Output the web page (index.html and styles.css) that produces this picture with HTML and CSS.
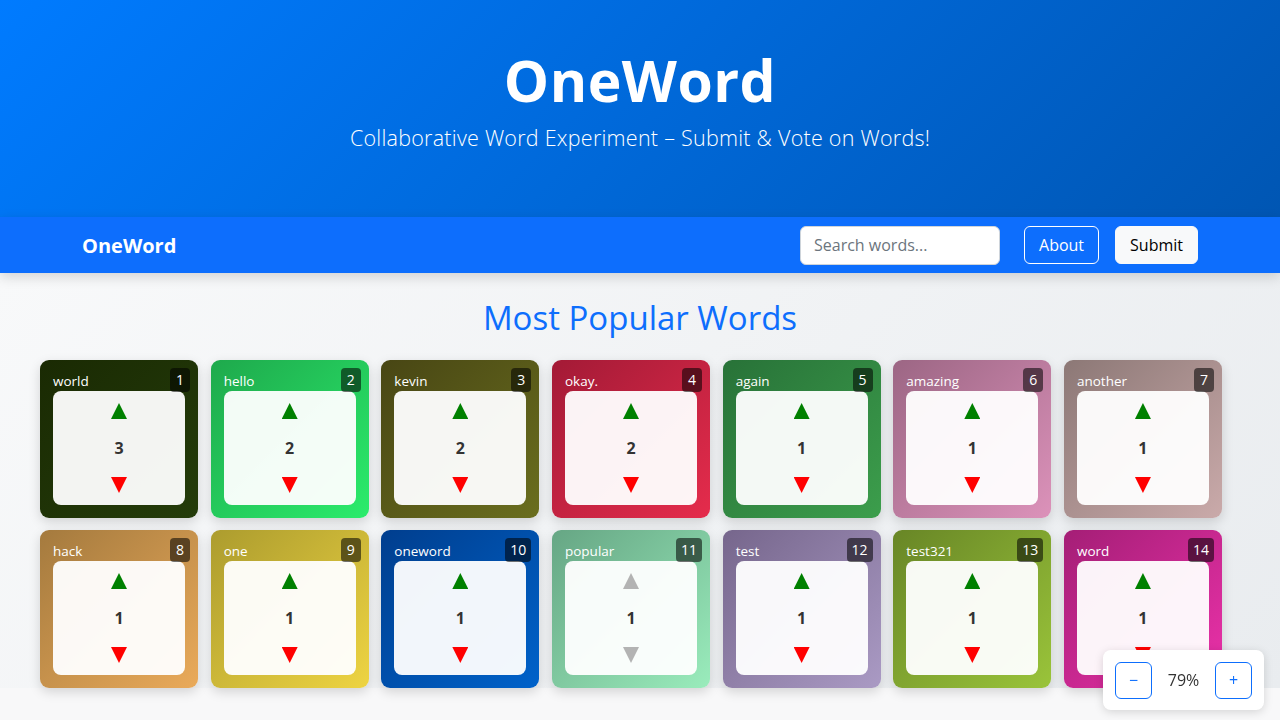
FILE: index.html
```html
<!DOCTYPE html>
<html lang="en">
<head>
<meta charset="utf-8">
<title>OneWord</title>
<link rel="stylesheet" href="styles.css">
</head>
<body>
<header class="hero">
  <h1 class="hero-title">OneWord</h1>
  <p class="hero-sub">Collaborative Word Experiment – Submit &amp; Vote on Words!</p>
</header>
<nav class="navbar">
  <div class="nav-inner">
    <a class="brand">OneWord</a>
    <div class="nav-right">
      <input class="search" type="text" placeholder="Search words...">
      <button class="btn btn-outline">About</button>
      <button class="btn btn-light">Submit</button>
    </div>
  </div>
</nav>
<main class="main">
  <h2 class="section-title">Most Popular Words</h2>
  <div class="grid">
    <div class="card c1"><span class="word">world</span><span class="rank">1</span><div class="vote"><span class="up"></span><span class="count">3</span><span class="down"></span></div></div>
    <div class="card c2"><span class="word">hello</span><span class="rank">2</span><div class="vote"><span class="up"></span><span class="count">2</span><span class="down"></span></div></div>
    <div class="card c3"><span class="word">kevin</span><span class="rank">3</span><div class="vote"><span class="up"></span><span class="count">2</span><span class="down"></span></div></div>
    <div class="card c4"><span class="word">okay.</span><span class="rank">4</span><div class="vote"><span class="up"></span><span class="count">2</span><span class="down"></span></div></div>
    <div class="card c5"><span class="word">again</span><span class="rank">5</span><div class="vote"><span class="up"></span><span class="count">1</span><span class="down"></span></div></div>
    <div class="card c6"><span class="word">amazing</span><span class="rank">6</span><div class="vote"><span class="up"></span><span class="count">1</span><span class="down"></span></div></div>
    <div class="card c7"><span class="word">another</span><span class="rank">7</span><div class="vote"><span class="up"></span><span class="count">1</span><span class="down"></span></div></div>
    <div class="card c8"><span class="word">hack</span><span class="rank">8</span><div class="vote"><span class="up"></span><span class="count">1</span><span class="down"></span></div></div>
    <div class="card c9"><span class="word">one</span><span class="rank">9</span><div class="vote"><span class="up"></span><span class="count">1</span><span class="down"></span></div></div>
    <div class="card c10"><span class="word">oneword</span><span class="rank">10</span><div class="vote"><span class="up"></span><span class="count">1</span><span class="down"></span></div></div>
    <div class="card c11"><span class="word">popular</span><span class="rank">11</span><div class="vote"><span class="up disabled"></span><span class="count">1</span><span class="down disabled"></span></div></div>
    <div class="card c12"><span class="word">test</span><span class="rank">12</span><div class="vote"><span class="up"></span><span class="count">1</span><span class="down"></span></div></div>
    <div class="card c13"><span class="word">test321</span><span class="rank">13</span><div class="vote"><span class="up"></span><span class="count">1</span><span class="down"></span></div></div>
    <div class="card c14"><span class="word">word</span><span class="rank">14</span><div class="vote"><span class="up"></span><span class="count">1</span><span class="down"></span></div></div>
  </div>
</main>
<div class="zoom">
  <button class="zbtn">−</button>
  <span class="zval">79%</span>
  <button class="zbtn">+</button>
</div>
</body>
</html>
```
FILE: styles.css
```css
* { box-sizing: border-box; }
html, body { margin: 0; padding: 0; }
body {
  font-family: "Open Sans", "Noto Sans", sans-serif;
  background: #f8f8f9;
  color: #212529;
  width: 1280px;
  height: 720px;
  overflow: hidden;
}
.hero {
  height: 217px;
  background: linear-gradient(135deg, #007bff 0%, #0056b3 100%);
  color: #fff;
  text-align: center;
  padding-top: 46px;
}
.hero-title {
  margin: 0;
  font-size: 57px;
  font-weight: 700;
  line-height: 68px;
  letter-spacing: 0.5px;
}
.hero-sub {
  margin: 10px 0 0;
  font-size: 21.5px;
  font-weight: 300;
  line-height: 28px;
  letter-spacing: 0.25px;
}
.navbar {
  height: 56px;
  background: #0d6efd;
  box-shadow: 0 4px 12px rgba(0,0,0,0.15);
  position: relative;
  z-index: 2;
}
.nav-inner {
  width: 1140px;
  margin: 0 auto;
  padding: 0 12px;
  height: 100%;
  display: flex;
  align-items: center;
  justify-content: space-between;
}
.brand {
  color: #fff;
  font-weight: 700;
  font-size: 20px;
}
.nav-right {
  display: flex;
  align-items: center;
}
.search {
  width: 200px;
  height: 39px;
  border: 1px solid #ced4da;
  border-radius: 6px;
  padding: 0 13px;
  font-family: inherit;
  font-size: 16px;
  color: #212529;
  background: #fff;
  margin-right: 24px;
}
.search::placeholder { color: #6c757d; }
.btn {
  height: 38px;
  padding: 0 14px;
  border-radius: 6px;
  font-family: inherit;
  font-size: 16px;
}
.btn-outline {
  background: transparent;
  border: 1px solid #fff;
  color: #fff;
  margin-right: 16px;
}
.btn-light {
  background: #f8f9fa;
  border: 1px solid #f8f9fa;
  color: #000;
}
.main {
  height: 415px;
  background: linear-gradient(135deg, #f8f9fa 0%, #e9ecef 100%);
  padding: 24px 0 0 40px;
}
.section-title {
  margin: 0 0 22px;
  text-align: center;
  color: #0d6efd;
  font-weight: 400;
  font-size: 33px;
  line-height: 41px;
  padding-right: 40px;
}
.grid {
  display: grid;
  grid-template-columns: repeat(7, 158px);
  column-gap: 12.67px;
  row-gap: 12px;
}
.card {
  position: relative;
  height: 158px;
  border-radius: 9px;
  padding: 12px 13px 13px;
  box-shadow: 0 4px 12px rgba(0,0,0,0.15);
  display: flex;
  flex-direction: column;
  color: #fff;
}
.word {
  font-size: 13.5px;
  line-height: 19px;
  height: 19px;
}
.rank {
  position: absolute;
  top: 8px;
  right: 8px;
  min-width: 20px;
  height: 24px;
  padding: 0 5px;
  border-radius: 4px;
  background: rgba(0,0,0,0.55);
  font-size: 14px;
  line-height: 24px;
  text-align: center;
}
.vote {
  flex: 1;
  background: rgba(255,255,255,0.95);
  border-radius: 8px;
  display: flex;
  flex-direction: column;
  align-items: center;
  justify-content: space-between;
  padding: 12px 0;
}
.up, .down {
  width: 16px;
  height: 16px;
  background: #008000;
  clip-path: polygon(50% 0, 100% 100%, 0 100%);
}
.down {
  background: #ff0000;
  clip-path: polygon(0 0, 100% 0, 50% 100%);
}
.up.disabled, .down.disabled { background: #b3b3b3; }
.count {
  color: #333;
  font-weight: 700;
  font-size: 16px;
  line-height: 20px;
}
.c1 { background: linear-gradient(135deg, #1a2a03, #243c0a); }
.c2 { background: linear-gradient(135deg, #1ea94c, #2bec6c); }
.c3 { background: linear-gradient(135deg, #484614, #6a6e1e); }
.c4 { background: linear-gradient(135deg, #a31a36, #e52c4c); }
.c5 { background: linear-gradient(135deg, #287238, #3c9e4c); }
.c6 { background: linear-gradient(135deg, #9c6684, #dc92ba); }
.c7 { background: linear-gradient(135deg, #8c7876, #caaaaa); }
.c8 { background: linear-gradient(135deg, #a47a3e, #eaaa5a); }
.c9 { background: linear-gradient(135deg, #ac9c2e, #eed442); }
.c10 { background: linear-gradient(135deg, #003e8e, #0062ca); }
.c11 { background: linear-gradient(135deg, #66a684, #9aecbc); }
.c12 { background: linear-gradient(135deg, #76668c, #aa9ac4); }
.c13 { background: linear-gradient(135deg, #688626, #9ac43a); }
.c14 { background: linear-gradient(135deg, #a41e76, #ec32aa); }
.zoom {
  position: fixed;
  right: 16px;
  bottom: 10px;
  width: 161px;
  height: 60px;
  background: #fff;
  border-radius: 8px;
  box-shadow: 0 2px 10px rgba(0,0,0,0.15);
  display: flex;
  align-items: center;
  justify-content: space-between;
  padding: 0 12px;
  z-index: 5;
}
.zbtn {
  width: 37px;
  height: 37px;
  border: 1px solid #0d6efd;
  border-radius: 6px;
  background: #fff;
  color: #0d6efd;
  font-family: inherit;
  font-size: 16px;
  padding: 0;
}
.zval {
  font-size: 16px;
  color: #333;
}
```
